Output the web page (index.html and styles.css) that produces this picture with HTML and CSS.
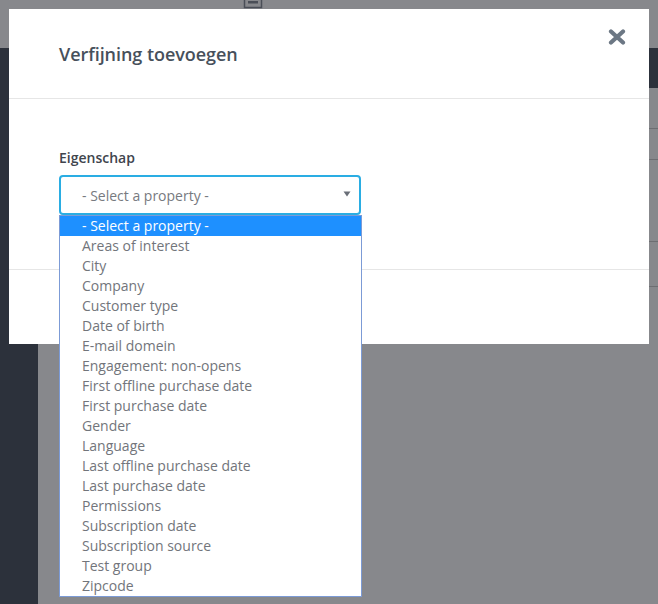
FILE: index.html
```html
<!DOCTYPE html>
<html lang="nl">
<head>
<meta charset="utf-8">
<title>Verfijning toevoegen</title>
<link rel="stylesheet" href="styles.css">
</head>
<body>
<div class="app">
  <div class="topbar">
    <svg class="top-icon" width="20" height="9" viewBox="0 0 20 9" aria-hidden="true">
      <path d="M1.5 0 V7.5 H18.5 V0" fill="none" stroke="#4a4e57" stroke-width="1.5"/>
      <rect x="5" y="1" width="10" height="2.5" fill="#4a4e57"/>
    </svg>
  </div>
  <div class="main">
    <aside class="sidebar"></aside>
    <div class="content">
      <div class="content-head"></div>
      <div class="row row-a"></div>
      <div class="row row-b"></div>
      <div class="row row-c"></div>
      <div class="row row-d"></div>
    </div>
  </div>
</div>

<div class="modal">
  <div class="modal-header">
    <h2 class="modal-title">Verfijning toevoegen</h2>
    <button class="close" aria-label="Sluiten">
      <svg width="18" height="16" viewBox="0 0 18 16"><path d="M3 2.5 L15 13.5 M15 2.5 L3 13.5" stroke="#6c7784" stroke-width="4.2" stroke-linecap="round"/></svg>
    </button>
  </div>
  <div class="modal-body">
    <label class="field-label">Eigenschap</label>
    <div class="select-wrap">
      <div class="select">
        <span class="select-text">- Select a property -</span>
        <svg class="select-arrow" width="8" height="6" viewBox="0 0 8 6"><path d="M0.5 0.5 H7.5 L4 5.5 Z" fill="#6a6f78"/></svg>
      </div>
      <ul class="dropdown">
        <li class="active">- Select a property -</li>
        <li>Areas of interest</li>
        <li>City</li>
        <li>Company</li>
        <li>Customer type</li>
        <li>Date of birth</li>
        <li>E-mail domein</li>
        <li>Engagement: non-opens</li>
        <li>First offline purchase date</li>
        <li>First purchase date</li>
        <li>Gender</li>
        <li>Language</li>
        <li>Last offline purchase date</li>
        <li>Last purchase date</li>
        <li>Permissions</li>
        <li>Subscription date</li>
        <li>Subscription source</li>
        <li>Test group</li>
        <li>Zipcode</li>
      </ul>
    </div>
  </div>
  <div class="modal-footer"></div>
</div>
</body>
</html>
```

FILE: styles.css
```css
* { box-sizing: border-box; }

html, body {
  margin: 0;
  padding: 0;
  height: 100%;
}

body {
  font-family: "Open Sans", "Liberation Sans", sans-serif;
  background: #87888c;
  overflow: hidden;
}

.app {
  display: flex;
  flex-direction: column;
  height: 604px;
}

.topbar {
  height: 48px;
  background: #87888c;
  flex: none;
}

.top-icon {
  display: block;
  margin-left: 243px;
}

.main {
  flex: 1;
  display: flex;
}

.sidebar {
  width: 38px;
  flex: none;
  background: #2c313b;
}

.content {
  flex: 1;
  background: #87888c;
}

.content-head {
  height: 40px;
  background: #2c313b;
}

.row { border-bottom: 1px solid #6d6e72; }
.row-a { height: 41px; }
.row-b { height: 31px; }
.row-c { height: 82px; }
.row-d { height: 45px; }

/* modal */
.modal {
  position: absolute;
  top: 9px;
  left: 9px;
  width: 640px;
  height: 335px;
  background: #fff;
  display: flex;
  flex-direction: column;
}

.modal-header {
  height: 90px;
  border-bottom: 1px solid #e6e6e6;
  padding: 0 50px;
  display: flex;
  align-items: center;
  position: relative;
}

.modal-title {
  margin: 0;
  font-size: 18px;
  font-weight: 600;
  color: #47505b;
  letter-spacing: -0.05px;
}

.close {
  position: absolute;
  top: 20px;
  right: 23px;
  padding: 0;
  border: 0;
  background: none;
  line-height: 0;
}

.modal-body {
  padding: 49px 50px 54px;
  border-bottom: 1px solid #e6e6e6;
}

.field-label {
  display: block;
  font-size: 14px;
  line-height: 20px;
  font-weight: 600;
  color: #40454d;
  margin-bottom: 7px;
}

.select-wrap {
  position: relative;
  width: 302px;
}

.select {
  height: 40px;
  border: 2px solid #2aade3;
  border-radius: 4px;
  display: flex;
  align-items: center;
  justify-content: space-between;
  padding: 0 8px 0 21px;
}

.select-text {
  font-size: 14px;
  color: #777a80;
}

.select-arrow { display: block; margin-top: -2px; }

.dropdown {
  position: absolute;
  top: 40px;
  left: 0;
  width: 303px;
  margin: 0;
  padding: 0;
  list-style: none;
  background: #fff;
  border: 1px solid #7c9bd6;
  z-index: 5;
}

.dropdown li {
  height: 20px;
  line-height: 20px;
  font-size: 14px;
  color: #72757b;
  padding-left: 22px;
  white-space: nowrap;
}

.dropdown li.active {
  background: #1e90ff;
  color: #fff;
}

.modal-footer {
  flex: 1;
}
```
